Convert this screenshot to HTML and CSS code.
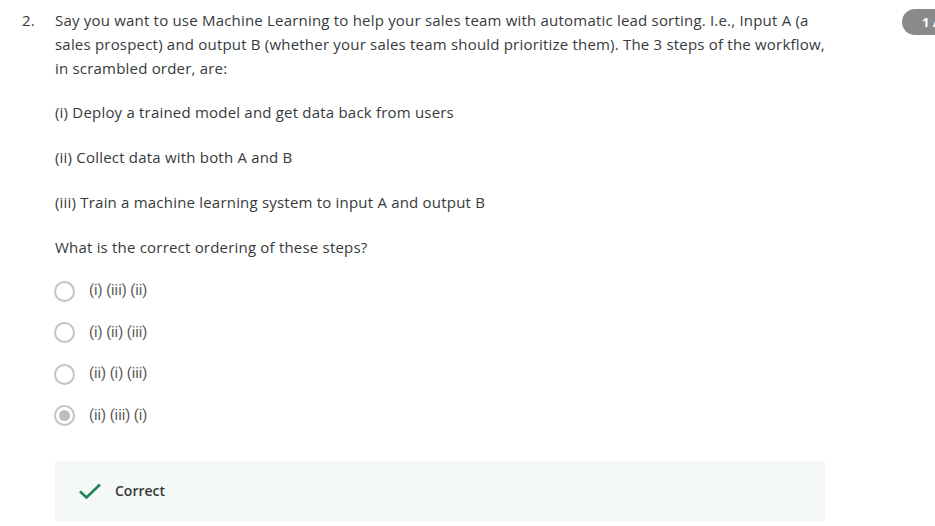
FILE: index.html
```html
<!DOCTYPE html>
<html>
<head>
<meta charset="utf-8">
<link rel="stylesheet" href="styles.css">
</head>
<body>
<div class="badge">1 / 1</div>
<div class="question">
  <div class="num">2.</div>
  <div class="content">
    <p class="prompt">Say you want to use Machine Learning to help your sales team with automatic lead sorting. I.e., Input A (a sales prospect) and output B (whether your sales team should prioritize them). The 3 steps of the workflow, in scrambled order, are:</p>
    <p>(i) Deploy a trained model and get data back from users</p>
    <p>(ii) Collect data with both A and B</p>
    <p>(iii) Train a machine learning system to input A and output B</p>
    <p>What is the correct ordering of these steps?</p>
    <div class="options">
      <div class="option"><span class="radio"></span><span class="label">(i) (iii) (ii)</span></div>
      <div class="option"><span class="radio"></span><span class="label">(i) (ii) (iii)</span></div>
      <div class="option"><span class="radio"></span><span class="label">(ii) (i) (iii)</span></div>
      <div class="option"><span class="radio checked"></span><span class="label">(ii) (iii) (i)</span></div>
    </div>
    <div class="feedback">
      <svg class="check" width="24" height="18" viewBox="0 0 24 18"><path d="M2 9.5 L8.5 15.5 L22 2.5" fill="none" stroke="#1f8354" stroke-width="2.6"/></svg>
      <span class="fb-text">Correct</span>
    </div>
  </div>
</div>
</body>
</html>
```

FILE: styles.css
```css
html, body {
  margin: 0;
  padding: 0;
  background: #fff;
  overflow: hidden;
}
body {
  font-family: "Open Sans", "DejaVu Sans", sans-serif;
  color: #373a3c;
  font-size: 15px;
  letter-spacing: 0.2px;
  line-height: 24px;
}
.question {
  display: flex;
  padding: 8px 0 0 22px;
}
.num {
  width: 33px;
  flex: none;
}
.content {
  width: 770px;
}
.content p {
  margin: 0 0 21px 0;
}
.content p.prompt {
  margin-bottom: 20px;
}
.options {
  display: flex;
  flex-direction: column;
  gap: 20.5px;
  margin-top: 21.5px;
}
.option {
  display: flex;
  align-items: center;
  height: 21px;
}
.radio {
  box-sizing: border-box;
  width: 21px;
  height: 21px;
  border: 2px solid #c4c4c4;
  border-radius: 50%;
  margin-left: -1px;
  display: flex;
  align-items: center;
  justify-content: center;
}
.radio.checked::after {
  content: "";
  width: 11px;
  height: 11px;
  border-radius: 50%;
  background: #bdbdbd;
}
.label {
  font-family: Roboto, "Liberation Sans", sans-serif;
  font-size: 14.5px;
  letter-spacing: 0;
  color: #555;
  margin-left: 14px;
}
.feedback {
  margin-top: 34.5px;
  height: 60px;
  background: #f4f9f8;
  display: flex;
  align-items: center;
  padding-left: 23px;
}
.check {
  display: block;
}
.fb-text {
  font-weight: 600;
  font-size: 14px;
  letter-spacing: 0;
  color: #373a3c;
  margin-left: 13px;
}
.badge {
  position: absolute;
  top: 9px;
  left: 902px;
  height: 26px;
  padding: 0 14px 0 20px;
  border-radius: 13px;
  background: #8a8a8a;
  color: #fff;
  font-weight: 700;
  font-size: 13px;
  letter-spacing: 0;
  line-height: 26px;
  white-space: nowrap;
}
```
